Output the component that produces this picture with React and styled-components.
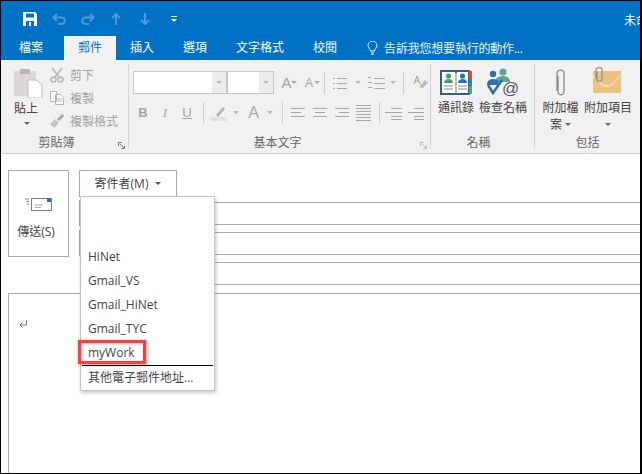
import React from "react";
import styled, { createGlobalStyle } from "styled-components";

const GlobalStyle = createGlobalStyle`
  html, body { margin: 0; padding: 0; background: #fff; }
  * { box-sizing: border-box; }
`;

const cjk = `"Open Sans", "Noto Sans CJK TC", sans-serif`;

const Frame = styled.div`
  width: 642px;
  height: 474px;
  display: flex;
  flex-direction: column;
  overflow: hidden;
  position: relative;
  border-style: solid;
  border-color: #000;
  border-width: 1px 2px 1px 1px;
  font-family: ${cjk};
  font-size: 12px;
  color: #444;
  background: #fff;
`;

/* title bar */
const TitleBar = styled.div`
  height: 35px;
  flex: none;
  background: #0072c6;
  display: flex;
  align-items: center;
  padding-left: 22px;
  color: #fff;
  overflow: hidden;
`;

const QatIcon = styled.svg`
  flex: none;
  margin-left: ${(p) => p.$ml || 0}px;
  color: ${(p) => (p.$dim ? "#4d9ad6" : "#fff")};
`;

const Title = styled.div`
  margin-left: 447px;
  flex: none;
  white-space: nowrap;
  font-size: 12px;
  position: relative;
  top: 1px;
`;

/* tabs */
const TabBar = styled.div`
  height: 24px;
  flex: none;
  background: #0072c6;
  display: flex;
  align-items: center;
  padding-left: 18px;
`;

const Tab = styled.div`
  height: 24px;
  line-height: 23px;
  margin-left: ${(p) => p.$ml || 0}px;
  padding: ${(p) => (p.$active ? "0 14px" : "0")};
  background: ${(p) => (p.$active ? "#f1f1f1" : "transparent")};
  color: ${(p) => (p.$active ? "#0072c6" : "#fff")};
  white-space: nowrap;
`;

const TellMe = styled.div`
  display: flex;
  align-items: center;
  gap: 6px;
  margin-left: 30px;
  color: #fff;
  white-space: nowrap;
  font-size: 12px;
  letter-spacing: -0.2px;
  opacity: 0.92;
`;

/* ribbon */
const Ribbon = styled.div`
  height: 94px;
  flex: none;
  background: #f1f1f1;
  border-bottom: 1px solid #d2d2d2;
  padding: 4px 0;
  display: flex;
`;

const Group = styled.div`
  width: ${(p) => p.$w}px;
  flex: none;
  display: flex;
  flex-direction: column;
  border-right: ${(p) => (p.$last ? "none" : "1px solid #d6d6d6")};
`;

const GroupBody = styled.div`
  flex: 1;
  display: flex;
  min-height: 0;
`;

const GroupLabel = styled.div`
  height: 17px;
  flex: none;
  text-align: center;
  line-height: 22px;
  color: #666;
  position: relative;
  padding-right: ${(p) => p.$pr || 0}px;
`;

const Launcher = styled.svg`
  position: absolute;
  right: 3px;
  bottom: 0;
`;

const PasteButton = styled.div`
  width: 30px;
  margin-left: 12px;
  padding-top: 4px;
  display: flex;
  flex-direction: column;
  align-items: center;
  flex: none;
`;

const ButtonText = styled.div`
  line-height: 16px;
  margin-top: ${(p) => p.$mt || 0}px;
  margin-right: ${(p) => p.$mr || 0}px;
  white-space: nowrap;
  text-align: center;
  color: #444;
`;

const Caret = styled.span`
  display: inline-block;
  width: 0;
  height: 0;
  border-left: 3px solid transparent;
  border-right: 3px solid transparent;
  border-top: 3px solid ${(p) => p.$color || "#666"};
  margin-left: ${(p) => p.$ml || 0}px;
  flex: none;
  vertical-align: middle;
`;

const CaretRow = styled.div`
  height: ${(p) => p.$h || 16}px;
  margin-right: ${(p) => p.$mr || 0}px;
  display: flex;
  align-items: center;
  justify-content: center;
`;

const SmallList = styled.div`
  margin: -1px 0 0 7px;
  display: flex;
  flex-direction: column;
`;

const SmallItem = styled.div`
  height: 23px;
  display: flex;
  align-items: center;
  gap: 6px;
  color: #a3a3a3;
  white-space: nowrap;
`;

const FontRows = styled.div`
  padding: 7px 0 0 4px;
  display: flex;
  flex-direction: column;
`;

const ToolRow = styled.div`
  height: 23px;
  display: flex;
  align-items: center;
  margin: ${(p) => p.$mt || 0}px 0 0 ${(p) => p.$ml || 0}px;
`;

const Combo = styled.div`
  width: ${(p) => p.$w}px;
  height: 23px;
  flex: none;
  background: #fff;
  border: 1px solid #c6c6c6;
  margin-left: ${(p) => p.$ml || 0}px;
  display: flex;
  justify-content: flex-end;
`;

const ComboArrow = styled.div`
  width: 14px;
  background: #ededed;
  display: flex;
  align-items: center;
  justify-content: center;
`;

const ToolSep = styled.div`
  width: 1px;
  height: 22px;
  flex: none;
  background: #d0d0d0;
  margin-left: ${(p) => p.$ml || 0}px;
`;

const LetterTool = styled.div`
  width: ${(p) => p.$w || 22}px;
  flex: none;
  margin-left: ${(p) => p.$ml || 0}px;
  text-align: center;
  color: #a6a6a6;
  font-family: ${(p) => (p.$serif ? '"Liberation Serif", serif' : '"Liberation Sans", sans-serif')};
  font-size: ${(p) => p.$size || 13}px;
  font-weight: ${(p) => (p.$bold ? 700 : 400)};
  font-style: ${(p) => (p.$italic ? "italic" : "normal")};
  text-decoration: ${(p) => (p.$under ? "underline" : "none")};
  line-height: 1;
`;

const ToolIcon = styled.svg`
  flex: none;
  margin-left: ${(p) => p.$ml || 0}px;
  color: #a9a9a9;
`;

const LargeRow = styled.div`
  display: flex;
  padding-left: ${(p) => p.$pl || 0}px;
  gap: ${(p) => p.$gap || 0}px;
`;

const LargeButton = styled.div`
  width: ${(p) => p.$w}px;
  flex: none;
  display: flex;
  flex-direction: column;
  align-items: center;
`;

const IconSlot = styled.div`
  height: 36px;
  width: 100%;
  display: flex;
  justify-content: center;
  align-items: center;
  padding-top: 1px;
`;

/* compose form */
const Compose = styled.div`
  flex: 1;
  min-height: 0;
  display: flex;
  flex-direction: column;
  padding: 16px 0 0 7px;
  position: relative;
`;

const Head = styled.div`
  display: flex;
  flex: none;
`;

const SendButton = styled.div`
  width: 61px;
  height: 87px;
  flex: none;
  border: 1px solid #ababab;
  display: flex;
  flex-direction: column;
  align-items: center;
  padding-top: 26px;
  gap: 11px;
`;

const SendLabel = styled.div`
  margin-right: 5px;
  white-space: nowrap;
`;

const Fields = styled.div`
  flex: 1;
  min-width: 0;
  margin-left: 10px;
  display: flex;
  flex-direction: column;
`;

const SenderButton = styled.div`
  width: 98px;
  height: 27px;
  border: 1px solid #ababab;
  display: flex;
  align-items: center;
  justify-content: center;
  color: #444;
  margin-bottom: 3px;
  padding-bottom: 1px;
  white-space: nowrap;
`;

const FieldRow = styled.div`
  height: 26px;
  margin-bottom: 4px;
  padding: 2px 0 1px;
  border-left: 1px solid ${(p) => (p.$stub ? "#ababab" : "transparent")};
`;

const FieldLine = styled.div`
  height: 100%;
  border-top: 1px solid #ababab;
  border-bottom: 1px solid #ababab;
`;

const Body = styled.div`
  flex: 1;
  margin-top: 3px;
  border-top: 1px solid #ababab;
  border-left: 1px solid #ababab;
  padding: 22px 0 0 10px;
  color: #777;
`;

/* sender dropdown */
const Menu = styled.div`
  position: absolute;
  left: 79px;
  top: 42px;
  width: 135px;
  background: #fff;
  border: 1px solid #c6c6c6;
  box-shadow: 1px 2px 4px rgba(0, 0, 0, 0.22);
  padding-top: 48px;
`;

const MenuItem = styled.div`
  height: 24px;
  line-height: 24px;
  padding-left: 7px;
  color: #444;
  font-size: 12px;
  white-space: nowrap;
`;

const MenuSep = styled.div`
  height: 1px;
  background: #000;
  margin: 0 1px 0 1px;
`;

const Highlight = styled.div`
  position: absolute;
  left: -3px;
  top: 143px;
  width: 68px;
  height: 24px;
  border: 3px solid #fb3f43;
  box-shadow: 1px 1px 4px rgba(0, 0, 0, 0.4), inset 1px 1px 3px rgba(0, 0, 0, 0.25);
`;

const Bars = ({ w = 14, h = 14, rows, ml }) => (
  <ToolIcon $ml={ml} width={w} height={h} viewBox={`0 0 ${w} ${h}`}>
    {rows.map(([x, y, len], i) => (
      <rect key={i} x={x} y={y} width={len} height="1" fill="currentColor" />
    ))}
  </ToolIcon>
);

const AddressBookIcon = () => (
  <svg width="32" height="28" viewBox="0 0 32 28">
    <path d="M1 2h14l1 1 1-1h12v23H1z" fill="#fff" stroke="#2b5f97" strokeWidth="2" />
    <path d="M16 3v22" stroke="#7b7b7b" />
    <rect x="29" y="2" width="3" height="7" fill="#d9542b" />
    <rect x="29" y="9" width="3" height="8" fill="#3b7db8" />
    <rect x="29" y="17" width="3" height="8" fill="#5fa36a" />
    <circle cx="8.5" cy="7" r="2.6" fill="#4f9a76" />
    <path d="M4 14c0-3 2-4 4.500-4s4.500 1 4.500 4z" fill="#4f9a76" />
    <circle cx="22.500" cy="7" r="2.600" fill="#2f6fb0" />
    <path d="M18 14c0-3 2-4 4.500-4s4.500 1 4.500 4z" fill="#2f6fb0" />
    <path d="M4 17h9M4 20h9M18 17h9M18 20h9" stroke="#8a8a8a" />
  </svg>
);

const CheckNamesIcon = () => (
  <svg width="34" height="32" viewBox="0 0 34 32">
    <circle cx="17" cy="5" r="3.500" fill="#5fa58f" />
    <path d="M9 15c0-4 4-6 8-6s7 2 7 6z" fill="#5fa58f" />
    <circle cx="7" cy="7" r="3.200" fill="#2f6fb0" />
    <path d="M1 18c0-4 2.500-6 6-6s6 2 6 6z" fill="#2f6fb0" />
    <path d="M2 18l5 8 9-13" fill="none" stroke="#2f6fb0" strokeWidth="2.600" />
    <text x="16" y="27" fontSize="17" fill="#555" fontFamily="'Liberation Sans', sans-serif">@</text>
  </svg>
);

const ClipIcon = ({ w = 12, h = 28, stroke = "#8c8c8c" }) => (
  <svg width={w} height={h} viewBox="0 0 12 28">
    <path
      d="M3 7v15c0 5 6 5 6 0V4C9 0 2 0 2 5v17"
      fill="none"
      stroke={stroke}
      strokeWidth="1.300"
    />
  </svg>
);

const App = () => {
  return (
    <Frame>
      <GlobalStyle />
      <TitleBar>
        <QatIcon width="14" height="14" viewBox="0 0 14 14">
          <path d="M0 0h12l2 2v12H0z" fill="currentColor" />
          <rect x="3" y="1.500" width="8" height="4" fill="#0072c6" />
          <rect x="3" y="9" width="8" height="5" fill="#0072c6" />
          <rect x="6" y="10" width="2" height="4" fill="#fff" />
        </QatIcon>
        <QatIcon $dim $ml={15} width="14" height="12" viewBox="0 0 14 12" fill="none" stroke="currentColor" strokeWidth="2">
          <path d="M5 1L1.500 4.500 5 8M2 4.500h7c5 0 5 6.500 0 6.500H6" />
        </QatIcon>
        <QatIcon $dim $ml={15} width="14" height="12" viewBox="0 0 14 12" fill="none" stroke="currentColor" strokeWidth="2">
          <path d="M9 1l3.500 3.500L9 8M12 4.500H5c-5 0-5 6.500 0 6.500h3" />
        </QatIcon>
        <QatIcon $dim $ml={16} width="10" height="12" viewBox="0 0 10 12" fill="none" stroke="currentColor" strokeWidth="2">
          <path d="M1 5l4-4 4 4M5 1v11" />
        </QatIcon>
        <QatIcon $dim $ml={19} width="10" height="12" viewBox="0 0 10 12" fill="none" stroke="currentColor" strokeWidth="2">
          <path d="M1 7l4 4 4-4M5 11V0" />
        </QatIcon>
        <QatIcon $ml={21} width="6" height="6" viewBox="0 0 6 6">
          <rect width="6" height="1" fill="currentColor" />
          <path d="M0 3h6L3 6z" fill="currentColor" />
        </QatIcon>
        <Title>未命名 - 郵件</Title>
      </TitleBar>

      <TabBar>
        <Tab>檔案</Tab>
        <Tab $active $ml={21}>郵件</Tab>
        <Tab $ml={14}>插入</Tab>
        <Tab $ml={29}>選項</Tab>
        <Tab $ml={29}>文字格式</Tab>
        <Tab $ml={29}>校閱</Tab>
        <TellMe>
          <svg width="11" height="14" viewBox="0 0 11 14" fill="none" stroke="#fff">
            <path d="M3.500 10C3.500 8 1 7 1 4.500a4.500 4.500 0 0 1 9 0C10 7 7.500 8 7.500 10zM4 12h3M4.500 13.500h2" />
          </svg>
          告訴我您想要執行的動作...
        </TellMe>
      </TabBar>

      <Ribbon>
        <Group $w={128}>
          <GroupBody>
            <PasteButton>
              <svg width="30" height="30" viewBox="0 0 30 30">
                <rect x="1" y="3" width="22" height="25" rx="1" fill="#dbd6d8" />
                <rect x="7" y="1" width="10" height="5" fill="#b9b5b7" />
                <path d="M15 12h9l5 5v13H15z" fill="#fff" stroke="#bdbdbd" />
              </svg>
              <ButtonText $mt={3} $mr={4}>貼上</ButtonText>
              <CaretRow $h={12} $mr={2}>
                <Caret />
              </CaretRow>
            </PasteButton>
            <SmallList>
              <SmallItem>
                <svg width="14" height="16" viewBox="0 0 14 16" fill="none" stroke="#b5b5b5" strokeWidth="1.500">
                  <path d="M2 1l7 9M12 1l-7 9" />
                  <circle cx="3.500" cy="12.500" r="2.500" />
                  <circle cx="10.500" cy="12.500" r="2.500" />
                </svg>
                剪下
              </SmallItem>
              <SmallItem>
                <svg width="14" height="14" viewBox="0 0 14 14" fill="#fff" stroke="#b5b5b5">
                  <path d="M.5.500h6v10h-6zM5.500 3.500h5l3 3v7h-8z" />
                  <path d="M7 8h5M7 10h5" />
                </svg>
                複製
              </SmallItem>
              <SmallItem>
                <svg width="14" height="14" viewBox="0 0 14 14">
                  <path d="M0 10l5-5 4 4-5 5z" fill="#c4c4c4" />
                  <path d="M7 5l5-5 2 2-5 5z" fill="#a8a8a8" />
                </svg>
                複製格式
              </SmallItem>
            </SmallList>
          </GroupBody>
          <GroupLabel $pr={16}>
            剪貼簿
            <Launcher width="7" height="7" viewBox="0 0 7 7" fill="none" stroke="#777">
              <path d="M.5 4V.5H4M2 2l4 4M3.500 6.500h3v-3" />
            </Launcher>
          </GroupLabel>
        </Group>

        <Group $w={302}>
          <GroupBody>
            <FontRows>
              <ToolRow>
                <Combo $w={94}>
                  <ComboArrow><Caret $color="#bbb" /></ComboArrow>
                </Combo>
                <Combo $w={47}>
                  <ComboArrow><Caret $color="#bbb" /></ComboArrow>
                </Combo>
                <LetterTool $w={13} $ml={6} $size={15}>A</LetterTool>
                <Caret $ml={-2} $color="#aaa" />
                <LetterTool $w={12} $ml={6} $size={12}>A</LetterTool>
                <Caret $ml={-1} $color="#aaa" />
                <ToolSep $ml={4} />
                <Bars
                  ml={8}
                  w={15}
                  rows={[[0, 2, 2], [4, 2, 10], [0, 7, 2], [4, 7, 10], [0, 12, 2], [4, 12, 10]]}
                />
                <Caret $ml={7} $color="#bbb" />
                <Bars
                  ml={7}
                  w={17}
                  rows={[[0, 1, 3], [6, 2, 11], [0, 6, 4], [6, 7, 11], [0, 11, 4], [6, 12, 11]]}
                />
                <Caret $ml={5} $color="#bbb" />
                <ToolSep $ml={7} />
                <ToolIcon $ml={9} width="15" height="15" viewBox="0 0 15 15">
                  <path d="M6 12l6-7 3 3-5 5z" fill="#bdbdbd" />
                  <path d="M1 9L4 1l3 8M2 6h4" fill="none" stroke="#b0a07a" />
                </ToolIcon>
              </ToolRow>
              <ToolRow $mt={7} $ml={-1}>
                <LetterTool $bold>B</LetterTool>
                <LetterTool $italic $serif>I</LetterTool>
                <LetterTool $under>U</LetterTool>
                <ToolSep $ml={5} />
                <ToolIcon $ml={7} width="16" height="16" viewBox="0 0 16 16">
                  <path d="M5 10l7-8 2 2-7 8z" fill="#b5b5b5" />
                  <rect y="12" width="16" height="4" fill="#e3dfe3" />
                </ToolIcon>
                <Caret $ml={6} $color="#bbb" />
                <LetterTool $w={11} $ml={9} $size={16}>A</LetterTool>
                <Caret $ml={8} $color="#bbb" />
                <ToolSep $ml={9} />
                <Bars ml={8} rows={[[0, 2, 14], [0, 6, 10], [0, 10, 14]]} />
                <Bars ml={8} rows={[[0, 2, 14], [2, 6, 10], [0, 10, 14]]} />
                <Bars ml={8} rows={[[0, 2, 14], [4, 6, 10], [0, 10, 14]]} />
                <Bars
                  ml={7}
                  w={15}
                  h={16}
                  rows={[[0, 0, 15], [0, 3, 15], [0, 6, 15], [0, 9, 15], [0, 12, 15], [0, 15, 15]]}
                />
                <ToolSep $ml={8} />
                <Bars ml={5} w={17} rows={[[6, 2, 11], [0, 6, 17], [6, 10, 11], [6, 13, 11]]} />
                <Bars ml={6} w={16} rows={[[6, 2, 10], [0, 6, 16], [6, 10, 10], [6, 13, 10]]} />
              </ToolRow>
            </FontRows>
          </GroupBody>
          <GroupLabel $pr={4}>
            基本文字
            <Launcher width="7" height="7" viewBox="0 0 7 7" fill="none" stroke="#bbb">
              <path d="M.5 4V.5H4M2 2l4 4M3.500 6.500h3v-3" />
            </Launcher>
          </GroupLabel>
        </Group>

        <Group $w={104}>
          <GroupBody>
            <LargeRow $pl={6} $gap={4}>
              <LargeButton $w={38}>
                <IconSlot><AddressBookIcon /></IconSlot>
                <ButtonText>通訊錄</ButtonText>
              </LargeButton>
              <LargeButton $w={48}>
                <IconSlot><CheckNamesIcon /></IconSlot>
                <ButtonText>檢查名稱</ButtonText>
              </LargeButton>
            </LargeRow>
          </GroupBody>
          <GroupLabel $pr={8}>名稱</GroupLabel>
        </Group>

        <Group $w={105} $last>
          <GroupBody>
            <LargeRow $pl={7} $gap={5}>
              <LargeButton $w={37}>
                <IconSlot><ClipIcon /></IconSlot>
                <ButtonText>附加檔</ButtonText>
                <CaretRow>案<Caret $ml={3} /></CaretRow>
              </LargeButton>
              <LargeButton $w={48}>
                <IconSlot>
                  <svg width="32" height="32" viewBox="0 0 32 32">
                    <rect x="1" y="4" width="28" height="22" fill="#ebc27f" />
                    <path d="M1 9c6 5 8 10 14 10 6 0 10-7 14-11" fill="none" stroke="#fff" strokeWidth="1" />
                    <path d="M5 5v7c0 3 5 3 5 0V2C10 0 4 0 4 3v9" fill="none" stroke="#8c8c8c" strokeWidth="1.200" />
                  </svg>
                </IconSlot>
                <ButtonText>附加項目</ButtonText>
                <CaretRow><Caret /></CaretRow>
              </LargeButton>
            </LargeRow>
          </GroupBody>
          <GroupLabel $pr={0}>包括</GroupLabel>
        </Group>
      </Ribbon>

      <Compose>
        <Head>
          <SendButton>
            <svg width="27" height="14" viewBox="0 0 27 14">
              <rect x="6.500" y="1.500" width="20" height="12" fill="#fff" stroke="#7f7f7f" />
              <rect x="22" y="1" width="4" height="4" fill="#2f6fb0" />
              <path d="M10 8h8M10 10.500h6" stroke="#a8a8a8" />
              <path d="M0 2h4M1 4.500h3M2 7h2" stroke="#8c8c8c" />
            </svg>
            <SendLabel>傳送(S)</SendLabel>
          </SendButton>
          <Fields>
            <SenderButton>
              寄件者(M)
              <Caret $ml={7} $color="#555" />
            </SenderButton>
            <FieldRow $stub><FieldLine /></FieldRow>
            <FieldRow $stub><FieldLine /></FieldRow>
            <FieldRow><FieldLine /></FieldRow>
          </Fields>
        </Head>
        <Body>
          <svg width="9" height="9" viewBox="0 0 9 9" fill="none" stroke="#777">
            <path d="M7.500 0v5H1M3.500 2.500L1 5l2.500 2.500" />
          </svg>
        </Body>
        <Menu>
          <MenuItem>HiNet</MenuItem>
          <MenuItem>Gmail_VS</MenuItem>
          <MenuItem>Gmail_HiNet</MenuItem>
          <MenuItem>Gmail_TYC</MenuItem>
          <MenuItem>myWork</MenuItem>
          <MenuSep />
          <MenuItem>其他電子郵件地址...</MenuItem>
          <Highlight />
        </Menu>
      </Compose>
    </Frame>
  );
};

export default App;
